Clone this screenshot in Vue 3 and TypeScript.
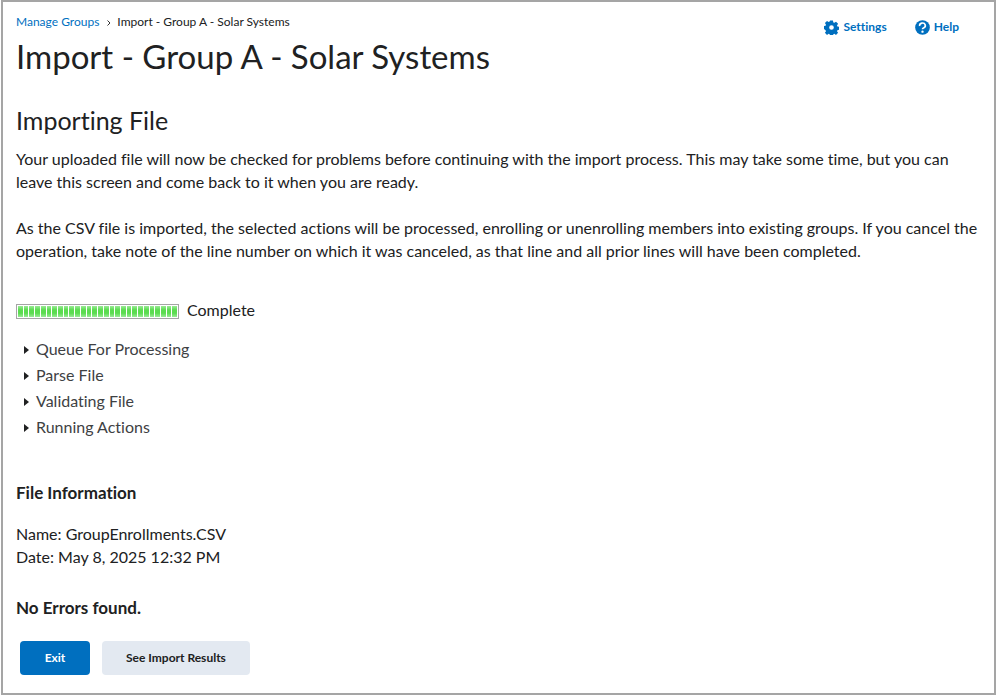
<script setup lang="ts">
import { ref } from 'vue'

const stages = ['Queue For Processing', 'Parse File', 'Validating File', 'Running Actions']
const segments = 28
const progress = ref<number>(100)
</script>

<template>
  <main class="page">
    <header class="top">
      <div>
        <nav class="crumbs" aria-label="Breadcrumb">
          <a href="#">Manage Groups</a>
          <svg class="chevron" viewBox="0 0 6 8" aria-hidden="true"><path d="M1.5 1.5 4 4 1.5 6.5" /></svg>
          <span>Import - Group A - Solar Systems</span>
        </nav>
        <h1>Import - Group A - Solar Systems</h1>
      </div>
      <div class="tools">
        <a href="#">
          <svg viewBox="0 0 18 18" aria-hidden="true">
            <path fill-rule="evenodd" d="M7.3.5h3.4l.5 2.4 1.2.5 2-1.3 2.5 2.5-1.3 2 .5 1.2 1.9.4v3.6l-1.9.4-.5 1.2 1.3 2-2.5 2.5-2-1.3-1.2.5-.5 2.4H7.3l-.5-2.4-1.2-.5-2 1.3-2.5-2.5 1.3-2-.5-1.2L0 10.8V7.2l1.9-.4.5-1.2-1.3-2 2.5-2.5 2 1.3 1.2-.5zM9 6.2a2.8 2.8 0 1 0 0 5.6 2.8 2.8 0 0 0 0-5.6z" />
          </svg>
          Settings
        </a>
        <a href="#">
          <svg viewBox="0 0 18 18" aria-hidden="true">
            <circle cx="9" cy="9" r="8.8" />
            <path class="mark" d="M5.6 7.2A3.4 3.1 0 1 1 10.2 9.6Q9 10 9 11.2" />
            <circle class="dot" cx="9" cy="14" r="1.4" />
          </svg>
          Help
        </a>
      </div>
    </header>

    <h2>Importing File</h2>
    <p>Your uploaded file will now be checked for problems before continuing with the import process. This may take some time, but you can leave this screen and come back to it when you are ready.</p>
    <p>As the CSV file is imported, the selected actions will be processed, enrolling or unenrolling members into existing groups. If you cancel the operation, take note of the line number on which it was canceled, as that line and all prior lines will have been completed.</p>

    <div class="status">
      <div class="bar" role="progressbar" aria-label="Import progress" :aria-valuenow="progress">
        <i v-for="n in segments" :key="n"></i>
      </div>
      <span>Complete</span>
    </div>

    <ul class="stages">
      <li v-for="stage in stages" :key="stage">
        <button type="button">
          <svg viewBox="0 0 5 8" aria-hidden="true"><path d="M0 0 5 4 0 8z" /></svg>
          {{ stage }}
        </button>
      </li>
    </ul>

    <h3>File Information</h3>
    <div class="info">
      <div>Name: GroupEnrollments.CSV</div>
      <div>Date: May 8, 2025 12:32 PM</div>
    </div>
    <h3 class="result">No Errors found.</h3>

    <div class="actions">
      <button type="button" class="primary">Exit</button>
      <button type="button">See Import Results</button>
    </div>
  </main>
</template>

<style>
body { margin: 0; background: #fff; }
</style>

<style scoped>
.page { box-sizing: border-box; min-height: calc(100vh - 1px); margin: 0 0 1px 1px; padding: 12px 13px 11px; border: 2px solid #a5a5a5; color: #202122; font: 16px/23px Lato, sans-serif; font-variant-ligatures: none; }
.top { display: flex; justify-content: space-between; }
a { color: #006fbf; text-decoration: none; }
.crumbs { display: flex; align-items: center; font-size: 12px; line-height: 16px; }
.chevron { width: 6px; height: 8px; margin: 2px 5px 0 7px; fill: none; stroke: #333; stroke-width: 1; }
h1, h2, h3, p { margin: 0; font-weight: 400; }
h1 { font-size: 33px; line-height: 40px; margin-top: 6px; }
.tools { display: flex; gap: 28px; padding: 4px 22px 0 0; font-size: 12px; font-weight: 700; line-height: 18px; }
.tools a { display: flex; gap: 4px; height: 18px; align-items: center; }
.tools svg { width: 15px; height: 15px; fill: #006fbf; }
.tools .mark { fill: none; stroke: #fff; stroke-width: 2; }
.tools .dot { fill: #fff; }
h2 { margin-top: 29px; font-size: 25px; line-height: 30px; }
p { margin-top: 12px; }
p + p { margin-top: 23px; }
.status { display: flex; align-items: center; gap: 8px; margin-top: 36px; }
.bar { box-sizing: border-box; display: flex; gap: 1px; width: 163px; height: 15px; margin-top: 4px; padding: 1px; border: 1px solid #a5a5a5; }
.bar i { flex: 1; background: linear-gradient(#9aea96, #5bdc50 35%, #5bdc50 65%, #9aea96); }
.stages { list-style: none; margin: 15px 0 0; padding: 0; }
.stages button { display: flex; align-items: center; gap: 7px; padding: 0 0 0 8px; border: 0; background: none; color: #3e4143; font: 16px/26px Lato, sans-serif; font-variant-ligatures: none; }
.stages svg { width: 5px; height: 8px; margin-top: 2px; fill: #202122; }
h3 { margin-top: 41px; font-size: 17px; line-height: 23px; font-weight: 700; }
.info { margin-top: 18px; }
.result { margin-top: 28px; }
.actions { display: flex; gap: 12px; margin: 22px 0 0 4px; }
.actions button { height: 34px; padding: 0 24px; border: 0; border-radius: 4px; background: #e3e9f1; color: #202122; font: 700 12px/16px Lato, sans-serif; }
.actions .primary { min-width: 70px; background: #006fbf; color: #fff; }
</style>
